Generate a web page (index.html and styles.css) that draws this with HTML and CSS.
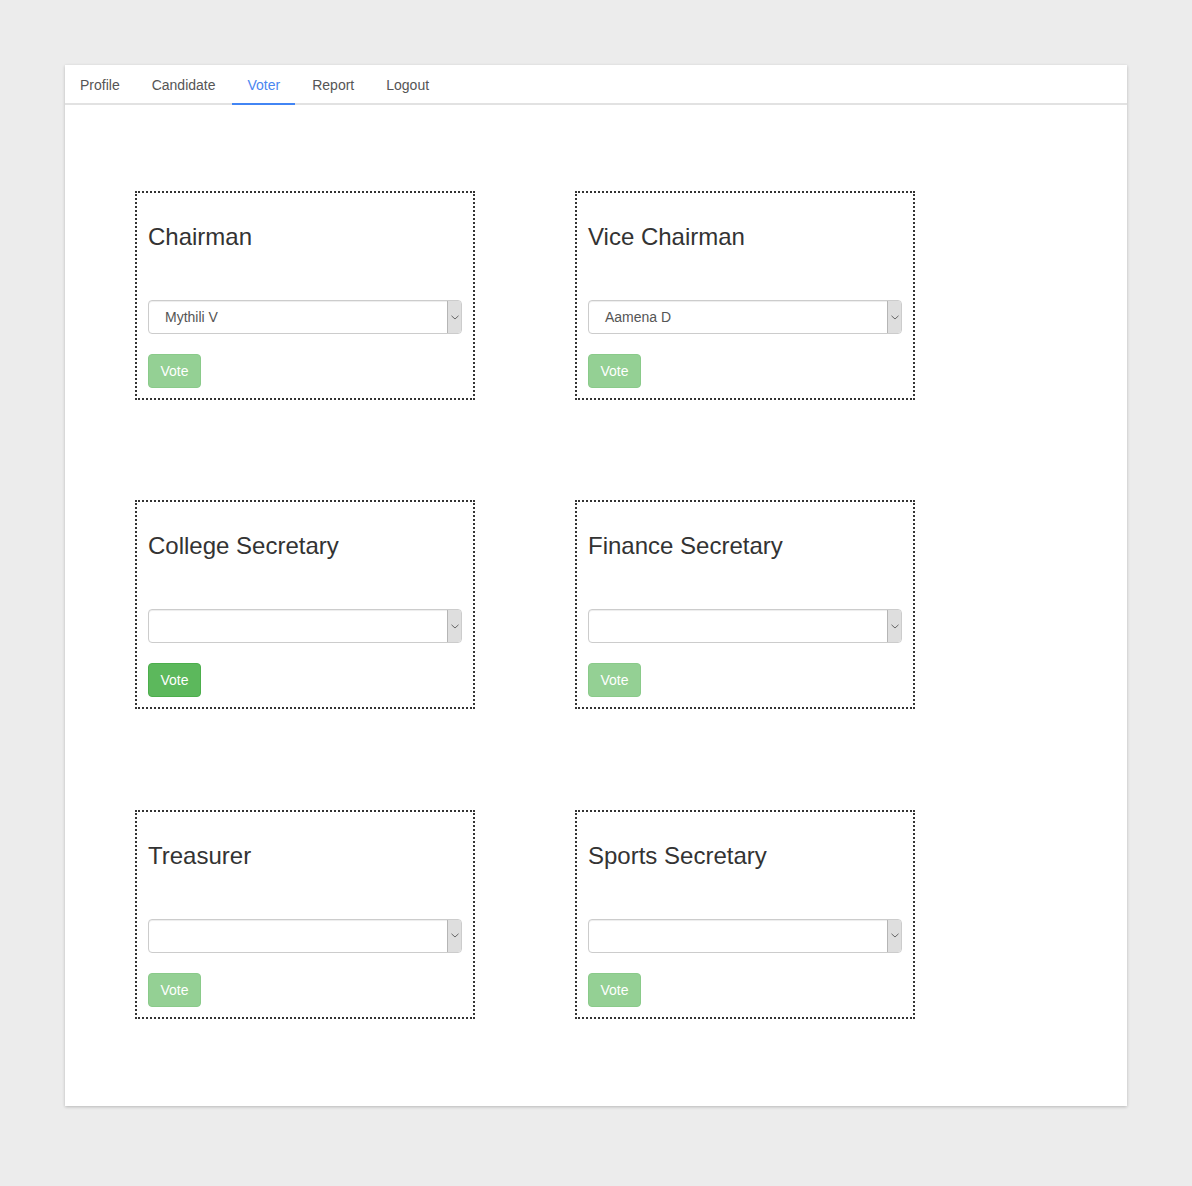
FILE: index.html
```html
<!DOCTYPE html>
<html>
<head>
<meta charset="utf-8">
<link rel="stylesheet" href="styles.css">
</head>
<body>
<div class="card">
  <nav class="tabs">
    <a class="tab">Profile</a>
    <a class="tab">Candidate</a>
    <a class="tab active">Voter</a>
    <a class="tab">Report</a>
    <a class="tab">Logout</a>
  </nav>
  <div class="grid">
    <div class="box">
      <h3>Chairman</h3>
      <div class="select"><span class="val">Mythili V</span><span class="arrow"><svg width="8" height="5" viewBox="0 0 8 5"><path d="M0.5 0.8 L4 4 L7.5 0.8" fill="none" stroke="#666" stroke-width="1"/></svg></span></div>
      <button class="btn disabled">Vote</button>
    </div>
    <div class="box">
      <h3>Vice Chairman</h3>
      <div class="select"><span class="val">Aamena D</span><span class="arrow"><svg width="8" height="5" viewBox="0 0 8 5"><path d="M0.5 0.8 L4 4 L7.5 0.8" fill="none" stroke="#666" stroke-width="1"/></svg></span></div>
      <button class="btn disabled">Vote</button>
    </div>
    <div class="box">
      <h3>College Secretary</h3>
      <div class="select"><span class="val"></span><span class="arrow"><svg width="8" height="5" viewBox="0 0 8 5"><path d="M0.5 0.8 L4 4 L7.5 0.8" fill="none" stroke="#666" stroke-width="1"/></svg></span></div>
      <button class="btn">Vote</button>
    </div>
    <div class="box">
      <h3>Finance Secretary</h3>
      <div class="select"><span class="val"></span><span class="arrow"><svg width="8" height="5" viewBox="0 0 8 5"><path d="M0.5 0.8 L4 4 L7.5 0.8" fill="none" stroke="#666" stroke-width="1"/></svg></span></div>
      <button class="btn disabled">Vote</button>
    </div>
    <div class="box">
      <h3>Treasurer</h3>
      <div class="select"><span class="val"></span><span class="arrow"><svg width="8" height="5" viewBox="0 0 8 5"><path d="M0.5 0.8 L4 4 L7.5 0.8" fill="none" stroke="#666" stroke-width="1"/></svg></span></div>
      <button class="btn disabled">Vote</button>
    </div>
    <div class="box">
      <h3>Sports Secretary</h3>
      <div class="select"><span class="val"></span><span class="arrow"><svg width="8" height="5" viewBox="0 0 8 5"><path d="M0.5 0.8 L4 4 L7.5 0.8" fill="none" stroke="#666" stroke-width="1"/></svg></span></div>
      <button class="btn disabled">Vote</button>
    </div>
  </div>
</div>
</body>
</html>
```
FILE: styles.css
```css
* { box-sizing: border-box; }
html, body { margin: 0; padding: 0; }
body {
  background: #ececec;
  font-family: "Liberation Sans", Arial, sans-serif;
  font-size: 14px;
  color: #333;
  padding: 65px 65px 80px 65px;
}
.card {
  width: 1062px;
  height: 1041px;
  background: #fff;
  box-shadow: 0 1px 3px rgba(0,0,0,0.22);
}
.tabs {
  display: flex;
  height: 40px;
  box-shadow: inset 0 -2px 0 #e2e2e2;
}
.tab {
  display: flex;
  align-items: center;
  height: 40px;
  padding: 1px 15px 0 15px;
  margin-right: 2px;
  color: #555;
  font-size: 14px;
  border-bottom: 2px solid transparent;
}
.tab.active {
  color: #4a86f0;
  border-bottom-color: #4285f4;
  margin-left: -1px;
  padding-left: 16px;
}
.grid {
  display: grid;
  grid-template-columns: 340px 340px;
  column-gap: 100px;
  row-gap: 100.4px;
  padding: 86px 70px 0 70px;
}
.box {
  border: 2px dotted #333;
  padding: 10px 11px;
  height: 209px;
}
.box h3 {
  margin: 21px 0 0 0;
  font-size: 24px;
  font-weight: normal;
  line-height: 26.4px;
  color: #333;
}
.select {
  margin-top: 49.6px;
  height: 34px;
  border: 1px solid #ccc;
  border-radius: 4px;
  display: flex;
  align-items: stretch;
  box-shadow: inset 0 1px 1px rgba(0,0,0,0.075);
  overflow: hidden;
}
.select .val {
  flex: 1;
  display: flex;
  align-items: center;
  padding-left: 16px;
  color: #555;
  font-size: 14px;
}
.select .arrow {
  width: 14px;
  background: #dedede;
  border-left: 1px solid #b5b5b5;
  display: flex;
  align-items: center;
  justify-content: center;
}
.btn {
  display: block;
  margin-top: 20px;
  width: 53px;
  height: 34px;
  padding: 0;
  text-align: center;
  font-family: "Liberation Sans", Arial, sans-serif;
  font-size: 14px;
  color: #fff;
  background: #5cb85c;
  border: 1px solid #4cae4c;
  border-radius: 4px;
}
.btn.disabled {
  opacity: 0.65;
}
```
